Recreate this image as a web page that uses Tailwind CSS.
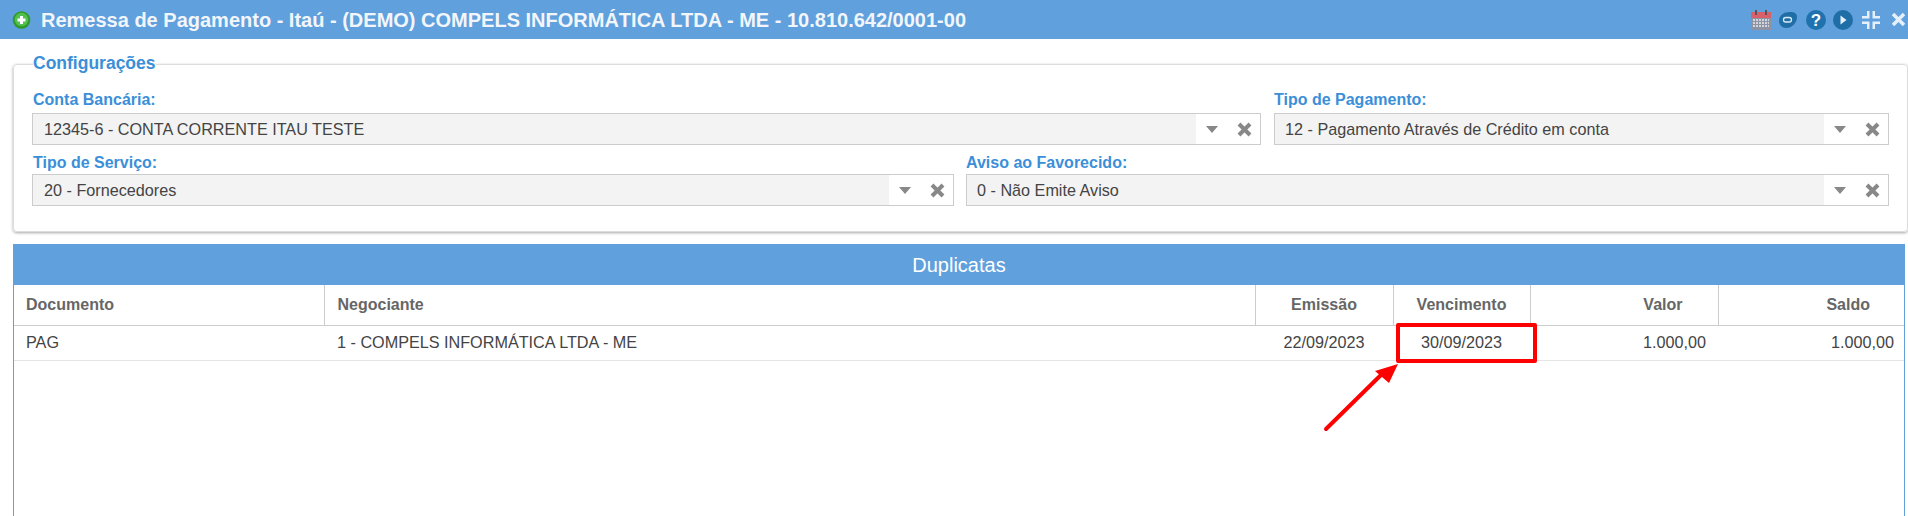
<!DOCTYPE html>
<html lang="pt-BR">
<head>
  <meta charset="UTF-8">
  <title>Remessa de Pagamento</title>
  <script src="https://cdn.jsdelivr.net/npm/@tailwindcss/browser@4"></script>
</head>
<body class="relative h-[516px] overflow-hidden bg-white font-['Liberation_Sans',Arial,sans-serif] text-[#444]">
  <!-- Top bar -->
  <header class="flex h-[39px] items-center bg-[#5fa0dd] pl-[12px] pr-[2px] text-white">
    <svg class="h-[18px] w-[19px] shrink-0" viewBox="0 0 19 18">
      <circle cx="9.5" cy="9" r="8.8" fill="#2f9a2c"/>
      <circle cx="9.5" cy="8.500" r="6.800" fill="#52c04a"/>
      <path d="M9.500 5v8M5.500 9h8" fill="none" stroke="#fff" stroke-width="3"/>
    </svg>
    <h1 class="ml-[10px] text-[20px] font-bold text-[#f2f6fb]">Remessa de Pagamento - Itaú - (DEMO) COMPELS INFORMÁTICA LTDA - ME - 10.810.642/0001-00</h1>
    <div class="ml-auto flex items-center">
      <svg class="h-[20px] w-[20px]" viewBox="0 0 20 20">
        <rect x="0" y="2" width="20" height="18" fill="#8d93a3"/>
        <rect x="0" y="2" width="20" height="6" fill="#d9606a"/>
        <rect x="4" y="0" width="2" height="5" fill="#555"/>
        <rect x="14" y="0" width="2" height="5" fill="#555"/>
        <path d="M2 10h16M2 13h16M2 16h16" stroke="#e8ebf2" stroke-width="1.500" stroke-dasharray="2 1"/>
      </svg>
      <svg class="ml-[7px] h-[18px] w-[19px]" viewBox="0 0 19 18">
        <path d="M1 10C1 4 6 1 12 1c4 0 7 1 7 5 0 6-5 11-11 11-4 0-7-3-7-7z" fill="#1f6ea8"/>
        <rect x="5.500" y="6.500" width="8" height="4.500" rx="2.200" fill="none" stroke="#dceaf6" stroke-width="1.300"/>
      </svg>
      <svg class="ml-[9px] h-[20px] w-[20px]" viewBox="0 0 20 20">
        <circle cx="10" cy="10" r="10" fill="#1f72ad"/>
        <text x="10" y="16" text-anchor="middle" font-size="17" font-weight="700" font-family="Liberation Sans" fill="#fff">?</text>
      </svg>
      <svg class="ml-[7px] h-[20px] w-[20px]" viewBox="0 0 20 20">
        <circle cx="10" cy="10" r="10" fill="#1f6ea8"/>
        <path d="M7.500 5.500l6 4.500-6 4.500z" fill="#e4eff8"/>
      </svg>
      <svg class="ml-[9px] h-[18px] w-[18px]" viewBox="0 0 18 18" fill="#e6f0fa">
        <path d="M5 0h2.500v7.500H0V5h5zM10.500 0H13v5h5v2.500h-7.500zM0 10.500h7.500V18H5v-5H0zM10.500 10.500H18V13h-5v5h-2.500z"/>
      </svg>
      <svg class="ml-[11px] h-[15px] w-[15px]" viewBox="0 0 15 15">
        <path d="M2 2l11 11M13 2L2 13" stroke="#e6f0fa" stroke-width="3.500"/>
      </svg>
    </div>
  </header>

  <!-- Configurações -->
  <fieldset class="mx-[13px] mt-[14px] h-[179px] w-[1891px] rounded-[4px] border border-[#ddd] px-[18px] pb-0 shadow-[0_1px_3px_rgba(0,0,0,0.35)]">
    <legend class="ml-px -translate-y-px text-[17.5px] leading-[22px] font-bold text-[#3b8fd8]">Configurações</legend>
    <div class="mt-[16px] flex gap-[13px]">
      <div class="w-[1229px]">
        <label class="block pl-px text-[16px] leading-[18px] font-bold text-[#3b8fd8]">Conta Bancária:</label>
        <div class="mt-[4px] flex h-[32px] border border-[#ccc] bg-white">
          <div class="flex flex-1 items-center bg-[#f3f3f3] pt-px pl-[11px] text-[16.2px]">12345-6 - CONTA CORRENTE ITAU TESTE</div>
          <div class="flex w-[64px] items-center gap-[19px] pl-[10px]">
            <span class="h-0 w-0 border-x-[6px] border-t-[7px] border-x-transparent border-t-[#888]"></span>
            <svg class="h-[15px] w-[15px]" viewBox="0 0 15 15"><path d="M2 2l11 11M13 2L2 13" stroke="#888" stroke-width="4"/></svg>
          </div>
        </div>
      </div>
      <div class="w-[615px]">
        <label class="block text-[16px] leading-[18px] font-bold text-[#3b8fd8]">Tipo de Pagamento:</label>
        <div class="mt-[4px] flex h-[32px] border border-[#ccc] bg-white">
          <div class="flex flex-1 items-center bg-[#f3f3f3] pt-px pl-[10px] text-[16.2px]">12 - Pagamento Através de Crédito em conta</div>
          <div class="flex w-[64px] items-center gap-[19px] pl-[10px]">
            <span class="h-0 w-0 border-x-[6px] border-t-[7px] border-x-transparent border-t-[#888]"></span>
            <svg class="h-[15px] w-[15px]" viewBox="0 0 15 15"><path d="M2 2l11 11M13 2L2 13" stroke="#888" stroke-width="4"/></svg>
          </div>
        </div>
      </div>
    </div>
    <div class="mt-[9px] flex gap-[12px]">
      <div class="w-[922px]">
        <label class="block pl-px text-[16px] leading-[18px] font-bold text-[#3b8fd8]">Tipo de Serviço:</label>
        <div class="mt-[2px] flex h-[32px] border border-[#ccc] bg-white">
          <div class="flex flex-1 items-center bg-[#f3f3f3] pt-px pl-[11px] text-[16.2px]">20 - Fornecedores</div>
          <div class="flex w-[64px] items-center gap-[19px] pl-[10px]">
            <span class="h-0 w-0 border-x-[6px] border-t-[7px] border-x-transparent border-t-[#888]"></span>
            <svg class="h-[15px] w-[15px]" viewBox="0 0 15 15"><path d="M2 2l11 11M13 2L2 13" stroke="#888" stroke-width="4"/></svg>
          </div>
        </div>
      </div>
      <div class="w-[923px]">
        <label class="block text-[16px] leading-[18px] font-bold text-[#3b8fd8]">Aviso ao Favorecido:</label>
        <div class="mt-[2px] flex h-[32px] border border-[#ccc] bg-white">
          <div class="flex flex-1 items-center bg-[#f3f3f3] pt-px pl-[10px] text-[16.2px]">0 - Não Emite Aviso</div>
          <div class="flex w-[64px] items-center gap-[19px] pl-[10px]">
            <span class="h-0 w-0 border-x-[6px] border-t-[7px] border-x-transparent border-t-[#888]"></span>
            <svg class="h-[15px] w-[15px]" viewBox="0 0 15 15"><path d="M2 2l11 11M13 2L2 13" stroke="#888" stroke-width="4"/></svg>
          </div>
        </div>
      </div>
    </div>
  </fieldset>

  <!-- Duplicatas -->
  <section class="mx-[13px] mt-[12px] h-[272px] w-[1892px] border-x border-[#5fa0dd]">
    <h2 class="flex h-[41px] items-center justify-center bg-[#5fa0dd] text-[20px] text-white">Duplicatas</h2>
    <table class="w-full table-fixed border-collapse text-[16.2px]">
      <colgroup>
        <col class="w-[310px]"><col class="w-[931px]"><col class="w-[138px]"><col class="w-[137px]"><col class="w-[188px]"><col>
      </colgroup>
      <thead>
        <tr class="h-[40px] border-b border-[#ccc] text-[16px] text-[#666]">
          <th class="border-r border-[#ccc] pt-px pl-[12px] text-left">Documento</th>
          <th class="border-r border-[#ccc] pt-px pl-[13px] text-left">Negociante</th>
          <th class="border-r border-[#ccc] pt-px text-center">Emissão</th>
          <th class="border-r border-[#ccc] pt-px text-center">Vencimento</th>
          <th class="border-r border-[#ccc] pt-px pr-[35px] text-right">Valor</th>
          <th class="pt-px pr-[34px] text-right">Saldo</th>
        </tr>
      </thead>
      <tbody>
        <tr class="h-[35px] border-b border-[#e5e5e5]">
          <td class="pl-[12px]">PAG</td>
          <td class="pl-[13px]">1 - COMPELS INFORMÁTICA LTDA - ME</td>
          <td class="text-center">22/09/2023</td>
          <td class="text-center">30/09/2023</td>
          <td class="pr-[12px] text-right">1.000,00</td>
          <td class="pr-[10px] text-right">1.000,00</td>
        </tr>
      </tbody>
    </table>
  </section>

  <!-- Red annotation over the table -->
  <div class="absolute left-[1396px] top-[323px] h-[40px] w-[141px] rounded-[2px] border-[4px] border-[#f00]"></div>
  <svg class="absolute left-[1320px] top-[360px] h-[75px] w-[85px]" viewBox="0 0 85 75">
    <path d="M6 69L64 12" stroke="#f00" stroke-width="4" stroke-linecap="round"/>
    <path d="M78 4L69 23 55 11z" fill="#f00"/>
  </svg>
</body>
</html>
